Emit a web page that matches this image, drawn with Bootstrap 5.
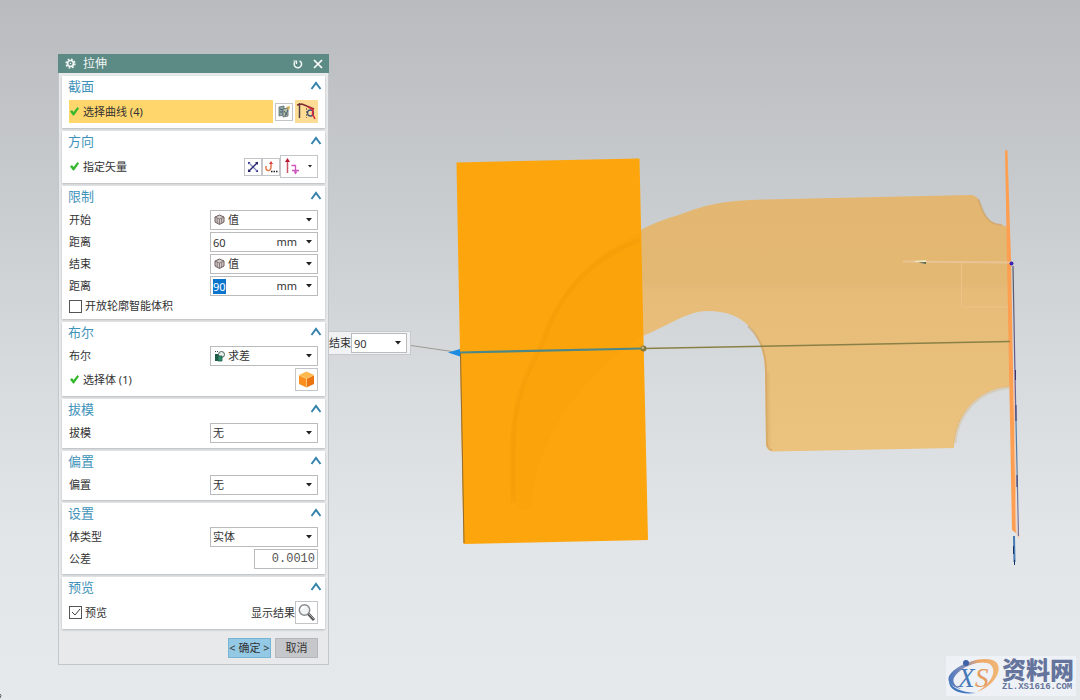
<!DOCTYPE html>
<html lang="zh-CN">
<head>
<meta charset="utf-8">
<meta name="viewport" content="width=device-width, initial-scale=1">
<title>拉伸</title>
<link href="https://cdn.jsdelivr.net/npm/bootstrap@5.3.0/dist/css/bootstrap.min.css" rel="stylesheet">
<style>
body{font-family:"Noto Sans","Noto Sans CJK SC",sans-serif;font-size:11px;line-height:16px;color:#333;background:linear-gradient(#b9bbbe 0%,#c5c8cb 22%,#d6dadd 52%,#e2e6e8 78%,#e6e9eb 100%) no-repeat}
.dlg{left:58px;top:54px;width:271px;background:#e8e9ea;border:1px solid #c3c7ca;border-top:0}
.dlg-title{height:19px;margin:0 -1px;padding:0 6px;gap:6px;background:#5c8a84;color:#f2f7f6;font-size:12px}
.dlg button{line-height:16px}
.plain{border:0;background:none;padding:0;color:inherit;display:flex}
.dlg-body{padding:3px 3px 0;gap:3px}
.sec{background:#fff;padding:0 7px 5px;box-shadow:0 1px 2px #b5b9bc}
.sec h2{height:21px;margin:0 -4px 3px -1px;font-size:13px;line-height:20px;font-weight:400;color:#3f93ba;padding-bottom:2px}
.rows{gap:2px}
.line{height:20px}
.line-lg{height:23px}
.line-sm{height:16px}
.tick-gap{gap:3px;padding-left:2px}
.icons-gap{gap:2px}
.picked{background:#ffd66b}
.field{width:108px;height:20px;border:1px solid #b9bbbd;background:#fff}
.field select,.field input{appearance:none;border:0;background:none;outline:0;color:#333;font-size:11px;line-height:16px;padding:0 2px;width:100%;height:100%;min-width:0;border-radius:0}
.field select,.drop{background:url("data:image/svg+xml,%3Csvg xmlns='http://www.w3.org/2000/svg' width='6' height='4'%3E%3Cpath d='M0 0h6L3 3.500z' fill='%23222'/%3E%3C/svg%3E") no-repeat right 5px center}
.field select.with-ico{padding-left:17px}
.field .ico{left:3px;top:3px;pointer-events:none}
.drop{border:0;width:20px;height:100%;flex:none}
.field input::selection{background:#0b74cc;color:#fff}
.tol{width:64px}
.tol input{font-family:"Liberation Mono",monospace;font-size:12px;text-align:right;color:#555}
.ibtn{border:1px solid #c3c5c8;background:#fff;padding:0;width:18px;height:18px;display:flex;align-items:center;justify-content:center;flex:none}
.ibtn-lg{width:23px;height:23px}
.ibtn-wide{width:38px;height:23px}
.ibtn-on{background:#fddd96;border-color:#fddd96}
.tick{appearance:none;width:13px;height:13px;margin:0;border:1px solid #555;background:#fff}
.tick:checked{background:#fff url("data:image/svg+xml,%3Csvg xmlns='http://www.w3.org/2000/svg' width='11' height='11'%3E%3Cpath d='M2 5l3 3 5-6' fill='none' stroke='%23444'/%3E%3C/svg%3E")}
.foot{padding:9px 10px 6px;gap:4px}
.fbtn{width:43px;height:20px;padding:0;border:1px solid #b5b7ba;background:#c6c7cb;color:#333;white-space:nowrap}
.fbtn-ok{background:#93c9e4;border-color:#76b3d4}
.callout-in{left:328px;top:331px;height:24px;background:#f1f2f3;border:1px solid #c6cacc;border-left:0;padding:0 3px 0 1px}
.callout-in .field{width:56px}
.brand{right:4px;bottom:4px;height:40px;background:#eef1f5;padding-right:2px;color:#65749c}
.brand-cn{font-family:"Noto Sans CJK SC",sans-serif;font-weight:900;font-size:24px;line-height:26px}
.brand-url{font-family:"Liberation Mono",monospace;font-weight:700;font-size:9px;line-height:10px}
</style>
</head>
<body class="vh-100 overflow-hidden position-relative">
<main class="h-100">
<svg class="d-block w-100 h-100" viewBox="0 0 1080 700" preserveAspectRatio="xMinYMin meet" role="img" aria-label="模型视图">
  <defs>
    <linearGradient id="solid" x1="0" y1="0" x2="0" y2="1"><stop offset="0" stop-color="#e3b772"/><stop offset=".34" stop-color="#e3b873"/><stop offset=".38" stop-color="#e7bc79"/><stop offset="1" stop-color="#ebc27e"/></linearGradient>
    <linearGradient id="axis" x1="0" y1="0" x2="0" y2="1"><stop offset="0" stop-color="#555a66"/><stop offset=".45" stop-color="#6b5b95"/><stop offset=".6" stop-color="#4b7fa8"/><stop offset="1" stop-color="#7d7396"/></linearGradient>
  </defs>
  <!-- swept solid -->
  <path fill="url(#solid)" d="M638 232C652 223 666 219 680 214.500C696 208 714 203 735 201Q750 199.500 765 199.500L970 195Q976 195 978 199C982 207 982 213 988 219Q992 224 1002 225Q1009 226 1010 233L1012 386.500C979 387 955 413 954 448L772 451.500Q767 450 766 445L765 372C765 338 748 311 708 311C688 311 669 325 644 335.500L638 336Z"/>
  <path fill="none" stroke="#c99a56" stroke-opacity=".5" stroke-width="2" d="M978 199C982 207 982 213 988 219Q992 224 1002 225M748 326C760 337 766 352 766 372L767 445Q768 449 772 450"/>
  <path fill="none" stroke="#d5a862" stroke-opacity=".3" stroke-width="3" d="M768 372L769 447M955 443C957 415 977 391 1009 387"/>
  <!-- extruded plate -->
  <path fill="#fda50d" d="M456.500 162.500L639.500 158.500L648 540L463.500 544Z"/>
  <path fill="#f99e08" opacity=".25" d="M641 232C610 248 580 265 556 308C548 321 544 340 538 352C524 380 511 411 511 449L511 490Q520 520 532 505C536 450 565 390 643 335Z"/>
  <path fill="none" stroke="#ef9705" stroke-opacity=".3" stroke-width="5" d="M640 240C612 250 580 270 558 308C548 322 544 342 535 358C522 382 513 408 513 450L513 503"/>
  <path fill="none" stroke="#916b33" d="M460.500 353L464 543"/>
  <!-- sketch plane -->
  <path fill="#fd9e50" d="M1005 151Q1007 149 1007.500 151L1011 260L1016 533L1012 530Z"/>
  <path stroke="#f9c29b" fill="none" d="M1014 370L1016 531L1019 538"/>
  <path fill="none" stroke="#e9c496" d="M903 261.500L1011 262.500" stroke-width="2"/>
  <path fill="none" stroke="#ecc388" d="M961.500 263V307H1008"/>
  <path fill="#eee7bd" d="M913 261L926 260V264Z"/><path fill="#556048" d="M918 262.500L926 262V264Z"/>
  <path fill="none" stroke="url(#axis)" stroke-width="1.200" d="M1013 266L1015 375L1018.500 536"/>
  <path stroke="#3d326a" d="M1015.500 370v10M1016 405v16M1017 475v12"/><path stroke="#4479b2" stroke-width="2" d="M1014 536L1014.500 562"/><path stroke="#18346a" d="M1013.500 546v8M1014.500 560v5"/>
  <circle cx="1011.500" cy="263.500" r="2" fill="#3b24b4"/>
  <!-- direction handle -->
  <path fill="none" stroke="#8a8045" stroke-width="1.600" d="M643 348.500L1010 341.500"/>
  <path fill="none" stroke="#4d8786" stroke-width="2.200" d="M460 352.500L643 348.500"/>
  <path fill="none" stroke="#999b91" d="M411 345.500L452 351.500"/>
  <path fill="#1d8be2" d="M448 352.500L460 349V356.500Z"/>
  <circle cx="643.500" cy="348.500" r="3" fill="#83783e"/><circle cx="642.800" cy="347.800" r="1.200" fill="#c5bc87"/>
  <path fill="none" stroke="#55585c" d="M0 694Q2 695 0 698"/>
</svg>
</main>

<div class="callout-in position-absolute d-flex align-items-center">
  <label for="endTag">结束</label>
  <div class="field d-flex"><input id="endTag" value="90"><button class="drop" type="button" aria-label="选项"></button></div>
</div>

<form class="dlg position-absolute" aria-label="拉伸">
  <header class="dlg-title d-flex align-items-center">
    <svg width="13" height="13" viewBox="0 0 13 13" fill="none" stroke="#f2f7f6"><circle cx="6.500" cy="6.500" r="3" stroke-width="1.700"/><circle cx="6.500" cy="6.500" r="4.400" stroke-width="1.500" stroke-dasharray="1.730 1.730"/><circle cx="6.500" cy="6.500" r=".7" fill="#fff" stroke="none"/></svg>
    <span class="flex-grow-1">拉伸</span>
    <button class="plain me-1" type="button" aria-label="重置"><svg width="10" height="10" viewBox="0 0 10 10" fill="none" stroke="#f2f7f6" stroke-width="1.500"><path d="M6.500 1.800A3.700 3.700 0 1 1 2 2.800"/><path d="M.5 2H3.500V5" stroke-width="1.200"/></svg></button>
    <button class="plain" type="button" aria-label="关闭"><svg width="10" height="10" viewBox="0 0 10 10" stroke="#fff" stroke-width="1.700"><path d="M1 1l8 8M9 1L1 9"/></svg></button>
  </header>

  <div class="dlg-body d-flex flex-column">
    <section class="sec">
      <h2 class="d-flex justify-content-between align-items-center">截面<button class="plain" type="button" aria-label="折叠"><svg width="12" height="9" viewBox="0 0 12 9"><path id="chev" d="M1.500 8L6 2L10.500 8" fill="none" stroke="#3583ab" stroke-width="2"/></svg></button></h2>
      <div class="line-lg icons-gap d-flex align-items-center">
        <div class="picked flex-grow-1 h-100 d-flex align-items-center"><svg width="10" height="9" viewBox="0 0 10 9"><path id="ok" d="M1 4.500L3 3L4.500 5L8.500 0L10 1.500L5 8.500H4Z" fill="#35b72e"/></svg><span class="ms-1">选择曲线 (4)</span></div>
        <button class="ibtn" type="button" aria-label="绘制截面"><svg width="13" height="13" viewBox="0 0 13 13"><path d="M1 2l5-1v9l-5 1z" fill="#90a5a5" stroke="#586c70" stroke-width=".8"/><path d="M5 4l5-1v8l-5 1z" fill="#b8c1a2" stroke="#53636c" stroke-width=".8"/><path d="M2 4l3 1M2 7l3 0M6 6l3 4M7 11l3-6" stroke="#486178"/><path d="M8 2l4-1-1 4z" fill="#d3ac4b"/></svg></button>
        <button class="ibtn ibtn-lg ibtn-on" type="button" aria-label="曲线"><svg width="21" height="21" viewBox="0 0 21 21" fill="none"><path d="M3.500 2V17" stroke="#554241" stroke-width="1.500"/><path d="M1 4L6 3L18 8" stroke="#7c2a36" stroke-width="1.600"/><path d="M10.500 7V17" stroke="#927454" stroke-dasharray="2 1"/><circle cx="14.500" cy="12" r="3" stroke="#3c527c" stroke-width="1.300"/><path d="M12 6L17 8.500L16.500 13L19 18" stroke="#d92c3a" stroke-width="1.600"/></svg></button>
      </div>
    </section>

    <section class="sec">
      <h2 class="d-flex justify-content-between align-items-center">方向<button class="plain" type="button" aria-label="折叠"><svg width="12" height="9"><use href="#chev"/></svg></button></h2>
      <div class="line-lg d-flex align-items-center">
        <div class="flex-grow-1 d-flex align-items-center"><svg width="10" height="9"><use href="#ok"/></svg><span class="ms-1">指定矢量</span></div>
        <button class="ibtn" type="button" aria-label="反向"><svg width="12" height="12" viewBox="0 0 12 12"><path d="M2 2L10 10" stroke="#8d92bb" stroke-width="1.300"/><path d="M2 10L10 2" stroke="#282775" stroke-width="1.500"/><path d="M8 1h3v3zM1 8v3h3z" fill="#29246f"/><path d="M1 1h2.500L1 3.500zM8.500 11H11V8.500z" fill="#36359a"/></svg></button>
        <button class="ibtn" type="button" aria-label="矢量对话框"><svg width="14" height="14" viewBox="0 0 14 14" fill="none"><path d="M2 6C1 12 7 12 7 7V3" stroke="#e1784e" stroke-width="1.500"/><path d="M5 4l2-3 2 3z" fill="#dc3d3e"/><path d="M7 11.500h1.500M9.500 11.500H11M12 11.500h1.500" stroke="#222" stroke-width="1.500"/></svg></button>
        <button class="ibtn ibtn-wide" type="button" aria-label="自动判断的矢量"><svg width="34" height="19" viewBox="0 0 34 19" fill="none"><path d="M5.500 4V16" stroke="#cb5368" stroke-width="1.500"/><path d="M3 5l2.500-4L8 5z" fill="#bd1734"/><path d="M9.500 8.500h4v7M10 13.500h7" stroke="#ce55bb" stroke-width="1.300"/><path d="M11.500 14.500h4l-2 3z" fill="#ce55bb"/><path d="M26 8h4l-2 2.500z" fill="#222"/></svg></button>
      </div>
    </section>

    <section class="sec">
      <h2 class="d-flex justify-content-between align-items-center">限制<button class="plain" type="button" aria-label="折叠"><svg width="12" height="9"><use href="#chev"/></svg></button></h2>
      <div class="rows d-flex flex-column">
        <div class="line d-flex justify-content-between align-items-center"><label for="start">开始</label>
          <div class="field position-relative"><svg class="ico position-absolute" width="11" height="11" viewBox="0 0 11 11"><g id="cube"><path d="M1 3l4.500-2L10 3v5l-4.500 2.500L1 8z" fill="#cfcbc8" stroke="#6c5d5d"/><path d="M1 3l4.500 2L10 3M5.500 5v5M3.200 4v5M7.700 4v5" fill="none" stroke="#7b6668" stroke-width=".8"/></g></svg><select id="start" class="with-ico"><option>值</option></select></div></div>
        <div class="line d-flex justify-content-between align-items-center"><label for="d1">距离</label>
          <div class="field d-flex align-items-center"><input id="d1" value="60"><span>mm</span><button class="drop" type="button" aria-label="选项"></button></div></div>
        <div class="line d-flex justify-content-between align-items-center"><label for="end">结束</label>
          <div class="field position-relative"><svg class="ico position-absolute" width="11" height="11"><use href="#cube"/></svg><select id="end" class="with-ico"><option>值</option></select></div></div>
        <div class="line d-flex justify-content-between align-items-center"><label for="d2">距离</label>
          <div class="field d-flex align-items-center"><input id="d2" value="90"><span>mm</span><button class="drop" type="button" aria-label="选项"></button></div></div>
        <div class="line-sm tick-gap ps-0 d-flex align-items-center"><input class="tick" type="checkbox" id="open"><label for="open">开放轮廓智能体积</label></div>
      </div>
    </section>

    <section class="sec">
      <h2 class="d-flex justify-content-between align-items-center">布尔<button class="plain" type="button" aria-label="折叠"><svg width="12" height="9"><use href="#chev"/></svg></button></h2>
      <div class="rows d-flex flex-column">
        <div class="line d-flex justify-content-between align-items-center"><label for="bool">布尔</label>
          <div class="field position-relative"><svg class="ico position-absolute" width="12" height="12" viewBox="0 0 12 12"><path d="M1 1.500h3" stroke="#444" stroke-dasharray="1 1"/><path d="M1 4h5v7H1z" fill="#1f5d4b"/><circle cx="7.500" cy="4.500" r="3" fill="#e6ece9" stroke="#4d625b"/><path d="M4 6h4v5H4z" fill="#2f8b68" stroke="#1f5d4b" stroke-width=".8"/></svg><select id="bool" class="with-ico"><option>求差</option></select></div></div>
        <div class="line-lg d-flex align-items-center">
          <div class="flex-grow-1 d-flex align-items-center"><svg width="10" height="9"><use href="#ok"/></svg><span class="ms-1">选择体 (1)</span></div>
          <button class="ibtn ibtn-lg" type="button" aria-label="选择体"><svg width="17" height="17" viewBox="0 0 17 17"><path d="M8.500.5L16 4L8.500 7.500L1 4Z" fill="#ffb84b"/><path d="M1 4l7.500 3.500v9L1 13z" fill="#fa8f1d"/><path d="M16 4L8.500 7.500v9L16 13z" fill="#e97410"/><path d="M1 4l7.500 3.500L16 4M8.500 7.500v9" stroke="#ffd180" fill="none" stroke-width=".8"/></svg></button>
        </div>
      </div>
    </section>

    <section class="sec">
      <h2 class="d-flex justify-content-between align-items-center">拔模<button class="plain" type="button" aria-label="折叠"><svg width="12" height="9"><use href="#chev"/></svg></button></h2>
      <div class="line d-flex justify-content-between align-items-center"><label for="draft">拔模</label><div class="field"><select id="draft"><option>无</option></select></div></div>
    </section>

    <section class="sec">
      <h2 class="d-flex justify-content-between align-items-center">偏置<button class="plain" type="button" aria-label="折叠"><svg width="12" height="9"><use href="#chev"/></svg></button></h2>
      <div class="line d-flex justify-content-between align-items-center"><label for="offs">偏置</label><div class="field"><select id="offs"><option>无</option></select></div></div>
    </section>

    <section class="sec">
      <h2 class="d-flex justify-content-between align-items-center">设置<button class="plain" type="button" aria-label="折叠"><svg width="12" height="9"><use href="#chev"/></svg></button></h2>
      <div class="rows d-flex flex-column">
        <div class="line d-flex justify-content-between align-items-center"><label for="body">体类型</label><div class="field"><select id="body"><option>实体</option></select></div></div>
        <div class="line d-flex justify-content-between align-items-center"><label for="tol">公差</label><div class="field tol"><input id="tol" value="0.0010"></div></div>
      </div>
    </section>

    <section class="sec">
      <h2 class="d-flex justify-content-between align-items-center">预览<button class="plain" type="button" aria-label="折叠"><svg width="12" height="9"><use href="#chev"/></svg></button></h2>
      <div class="line-lg tick-gap ps-0 d-flex align-items-center">
        <input class="tick" type="checkbox" id="prev" checked><label class="flex-grow-1" for="prev">预览</label>
        <div class="d-flex align-items-center"><span id="showRes">显示结果</span>
        <button class="ibtn ibtn-lg" type="button" aria-labelledby="showRes"><svg width="19" height="19" viewBox="0 0 19 19" fill="none"><circle cx="7.500" cy="7" r="5.200" fill="#f0f3f4" stroke="#8a8c8e" stroke-width="1.500"/><path d="M4.500 7a3 3 0 0 1 3-3" stroke="#fff" stroke-width="1.500"/><path d="M11.500 11l5.500 6" stroke="#555" stroke-width="3"/><path d="M12 11l5 5" stroke="#aaa"/></svg></button></div>
      </div>
    </section>
  </div>
  <footer class="foot d-flex justify-content-end">
    <button class="fbtn fbtn-ok" type="button">&lt; 确定 &gt;</button>
    <button class="fbtn" type="button">取消</button>
  </footer>
</form>

<div class="brand position-absolute d-flex">
  <svg width="56" height="40" viewBox="0 0 56 40" role="img" aria-label="XS">
    <defs><linearGradient id="ring" x1="0" y1="0" x2="1" y2="0"><stop offset="0" stop-color="#4b78c0"/><stop offset=".35" stop-color="#8f93b5"/><stop offset=".6" stop-color="#eda567"/><stop offset="1" stop-color="#f0b878"/></linearGradient></defs>
    <path d="M15 33C-1 29 -1 20 11 12C24 3 44 0 50 6C58 15 47 30 31 36C45 27 51 16 45 9C39 4 24 7 14 15C5 22 5 28 15 33Z" fill="url(#ring)"/>
    <path d="M3 25C3 34 13 39 30 37C14 36 6 32 3 25Z" fill="#3f75bd"/>
    <circle cx="20" cy="7" r="3" fill="#3c62a8"/>
    <text x="12" y="31" font-family="Liberation Serif, serif" font-style="italic" font-size="27" fill="#4679b8">X</text>
    <text x="29" y="31" font-family="Liberation Serif, serif" font-style="italic" font-size="27" fill="#e59a5e">S</text>
  </svg>
  <div class="d-flex flex-column pt-0">
    <span class="brand-cn">资料网</span>
    <span class="brand-url">ZL.XS1616.COM</span>
  </div>
</div>
<script src="https://cdn.jsdelivr.net/npm/bootstrap@5.3.0/dist/js/bootstrap.bundle.min.js"></script>
<script>
document.getElementById('d2').select();
</script>
</body>
</html>
